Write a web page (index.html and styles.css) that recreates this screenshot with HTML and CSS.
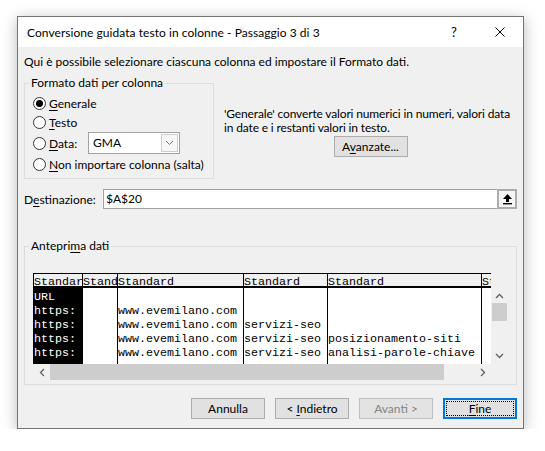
FILE: index.html
```html
<!DOCTYPE html>
<html lang="it">
<head>
<meta charset="utf-8">
<title>Conversione guidata testo in colonne</title>
<link rel="stylesheet" href="styles.css">
</head>
<body>
<div class="desk">
  <div class="dialog">
    <div class="titlebar">
      <span class="title">Conversione guidata testo in colonne - Passaggio 3 di 3</span>
      <span class="help">?</span>
      <span class="close">
        <svg width="10" height="10" viewBox="0 0 10 10"><path d="M0.5 0.5 L9.5 9.5 M9.5 0.5 L0.5 9.5" stroke="#000" stroke-width="1" fill="none"/></svg>
      </span>
    </div>
    <div class="content">
      <p class="intro">Qui è possibile selezionare ciascuna colonna ed impostare il Formato dati.</p>
      <div class="top">
        <fieldset class="group format">
          <legend>Formato dati per colonna</legend>
          <div class="radio r1"><span class="dot on"></span><span><u>G</u>enerale</span></div>
          <div class="radio r2"><span class="dot"></span><span><u>T</u>esto</span></div>
          <div class="radio r3"><span class="dot"></span><span class="data-lbl"><u>D</u>ata:</span>
            <span class="combo"><span class="combo-val">GMA</span><span class="combo-btn"><svg width="9" height="6" viewBox="0 0 9 6"><path d="M1 1 L4.5 4.5 L8 1" stroke="#707070" stroke-width="1" fill="none"/></svg></span></span>
          </div>
          <div class="radio r4"><span class="dot"></span><span><u>N</u>on importare colonna (salta)</span></div>
        </fieldset>
        <div class="info">
          <p class="info-text">'Generale' converte valori numerici in numeri, valori data<br>in date e i restanti valori in testo.</p>
          <button class="btn">A<u>v</u>anzate...</button>
        </div>
      </div>
      <div class="dest">
        <span class="dest-lbl">D<u>e</u>stinazione:</span>
        <span class="dest-input"><span class="dest-val">$A$20</span>
          <span class="dest-btn"><svg width="11" height="12" viewBox="0 0 11 12"><path d="M5.5 1 L10 6 L7 6 L7 9 L4 9 L4 6 L1 6 Z" fill="#000"/><rect x="1" y="10" width="9" height="1.4" fill="#000"/></svg></span>
        </span>
      </div>
      <fieldset class="group preview">
        <legend>Antepri<u>m</u>a dati</legend>
        <div class="grid">
          <div class="sheet">
            <div class="col c1"><div class="h">Standard</div><div class="d"><div>URL</div><div>https:</div><div>https:</div><div>https:</div><div>https:</div></div></div>
            <div class="col c2"><div class="h">Standard</div><div class="d"></div></div>
            <div class="col c3"><div class="h">Standard</div><div class="d"><div> </div><div>www.evemilano.com</div><div>www.evemilano.com</div><div>www.evemilano.com</div><div>www.evemilano.com</div></div></div>
            <div class="col c4"><div class="h">Standard</div><div class="d"><div> </div><div> </div><div>servizi-seo</div><div>servizi-seo</div><div>servizi-seo</div></div></div>
            <div class="col c5"><div class="h">Standard</div><div class="d"><div> </div><div> </div><div> </div><div>posizionamento-siti</div><div>analisi-parole-chiave</div></div></div>
            <div class="col c6"><div class="h">Standard</div><div class="d"></div></div>
          </div>
          <div class="vscroll">
            <span class="arr up"><svg width="9" height="6" viewBox="0 0 9 6"><path d="M1 5 L4.5 1.5 L8 5" stroke="#606060" stroke-width="1.3" fill="none"/></svg></span>
            <span class="vthumb"></span>
            <span class="vspace"></span>
            <span class="arr down"><svg width="9" height="6" viewBox="0 0 9 6"><path d="M1 1 L4.5 4.5 L8 1" stroke="#606060" stroke-width="1.3" fill="none"/></svg></span>
          </div>
          <div class="hscroll">
            <span class="harr"><svg width="6" height="9" viewBox="0 0 6 9"><path d="M5 1 L1.5 4.5 L5 8" stroke="#606060" stroke-width="1.3" fill="none"/></svg></span>
            <span class="hthumb"></span>
            <span class="hspace"></span>
            <span class="harr"><svg width="6" height="9" viewBox="0 0 6 9"><path d="M1 1 L4.5 4.5 L1 8" stroke="#606060" stroke-width="1.3" fill="none"/></svg></span>
          </div>
        </div>
      </fieldset>
      <div class="buttons">
        <button class="btn">Annulla</button>
        <button class="btn">&lt; <u>I</u>ndietro</button>
        <button class="btn disabled">Avanti &gt;</button>
        <button class="btn fine"><u>F</u>ine</button>
      </div>
    </div>
  </div>
</div>
</body>
</html>
```
FILE: styles.css
```css
* { box-sizing: border-box; }
html, body { margin: 0; padding: 0; background: #fff; }
body { font-family: Lato, "Noto Sans", sans-serif; font-size: 12px; color: #000; }
u { text-decoration-thickness: 1px; text-underline-offset: 2px; }

.desk { padding: 16px 0 0 17px; }
.dialog {
  width: 507px; height: 413px;
  border: 1px solid #747474;
  background: #f0f0f0;
  box-shadow: 0 3px 14px rgba(0,0,0,0.28);
  display: flex; flex-direction: column;
}
.titlebar { height: 30px; flex: none; background: #fff; display: flex; align-items: center; padding-left: 9px; }
.title { flex: 1; letter-spacing: 0.05px; }
.help { width: 46px; text-align: center; font-size: 13px; }
.close { width: 46px; height: 30px; display: flex; align-items: center; justify-content: center; }
.close svg { display: block; }

.content { padding: 7px 6px 0 6px; display: flex; flex-direction: column; }
.intro { margin: 0; line-height: 16px; }

.top { display: flex; align-items: flex-start; margin-top: 5px; }
fieldset.group { margin: 0; border: 1px solid #dcdcdc; padding: 2px 3px 4px 4px; min-width: 0; }
legend { padding: 0 2px; line-height: 16px; }
.format { width: 190px; flex: none; }

.radio { display: flex; align-items: center; }
.r1 { height: 20px; }
.r2 { height: 19px; }
.r3 { height: 22px; }
.r4 { height: 20px; }
.dot {
  width: 13px; height: 13px; flex: none;
  border: 1px solid #333; border-radius: 50%; background: #fff;
  margin: 0 3px 0 4px;
  display: flex; align-items: center; justify-content: center;
}
.dot.on::after { content: ""; width: 7px; height: 7px; border-radius: 50%; background: #000; }
.data-lbl { width: 39px; flex: none; }
.combo {
  width: 92px; height: 22px; border: 1px solid #a2a2a2; background: #fff;
  display: flex; align-items: stretch;
}
.combo-val { flex: 1; padding-left: 4px; line-height: 20px; }
.combo-btn {
  width: 17px; margin: 1px; border: 1px solid #cfcfcf; background: #f7f7f7;
  display: flex; align-items: center; justify-content: center;
}

.info { flex: 1; margin-left: 10px; margin-top: 32px; display: flex; flex-direction: column; align-items: center; }
.info-text { margin: 0; line-height: 14px; align-self: flex-start; white-space: nowrap; letter-spacing: -0.15px; }
.btn {
  width: 74px; height: 21px; padding: 0;
  border: 1px solid #adadad; background: #e1e1e1;
  font: inherit; color: #000;
}
.info .btn { margin-top: 1px; }

.dest { display: flex; align-items: center; margin-top: 10px; height: 20px; flex: none; }
.dest-lbl { width: 79px; flex: none; }
.dest-input {
  flex: 1; height: 20px; border: 1px solid #a2a2a2; background: #fff;
  display: flex; align-items: stretch;
}
.dest-val { flex: 1; padding-left: 2px; line-height: 18px; }
.dest-btn {
  width: 20px; margin: -1px -1px -1px 0; border: 2px solid #adadad; background: #f6f6f6;
  display: flex; align-items: center; justify-content: center;
}
.dest-btn svg { display: block; }

fieldset.preview { margin-top: 29px; padding-top: 19px; }

.grid { margin-left: 4px; display: grid; grid-template-columns: 458px 17px; grid-template-rows: 91px 16px; }
.sheet {
  display: flex; border-left: 1px solid #000; overflow: hidden;
  font-family: "Liberation Mono", "Courier New", monospace; font-size: 11.667px;
}
.col { display: flex; flex-direction: column; border-right: 1px solid #000; overflow: hidden; flex: none; }
.c1 { width: 49px; }
.c2 { width: 35px; }
.c3 { width: 126px; }
.c4 { width: 84px; }
.c5 { width: 154px; }
.c6 { width: 9px; border-right: none; }
.h {
  flex: none;
  height: 15px; border-top: 1px solid #000; border-bottom: 2px solid #000;
  line-height: 17px; white-space: pre; overflow: hidden; background: #f0f0f0;
}
.d { flex: 1; min-height: 0; overflow: hidden; background: #fff; padding-top: 2px; }
.c1 .d { background: #000; color: #fff; }
.d div { height: 14px; line-height: 14px; white-space: pre; overflow: hidden; }

.vscroll { grid-column: 2; grid-row: 1; margin-top: 15px; background: #f0f0f0; display: flex; flex-direction: column; align-items: center; }
.arr { height: 15px; width: 17px; display: flex; align-items: center; justify-content: center; flex: none; }
.arr.down { height: 16px; }
.vthumb { width: 15px; height: 18px; background: #cdcdcd; flex: none; }
.vspace { flex: 1; }

.hscroll { grid-column: 1; grid-row: 2; display: flex; background: #f0f0f0; height: 16px; }
.harr { width: 17px; display: flex; align-items: center; justify-content: center; flex: none; }
.hthumb { width: 394px; background: #cdcdcd; flex: none; }
.hspace { flex: 1; }

.buttons { display: flex; justify-content: flex-end; gap: 10px; margin-top: 13px; }
.btn.disabled { color: #838383; border-color: #bfbfbf; background: #e3e3e3; }
.btn.fine { border: 2px solid #0078d7; outline: 1px dotted #000; outline-offset: -4px; }
```
